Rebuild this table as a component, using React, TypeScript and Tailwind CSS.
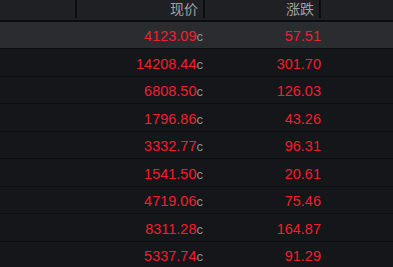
import React from "react";

const rows = [
  ["4123.09", "57.51"],
  ["14208.44", "301.70"],
  ["6808.50", "126.03"],
  ["1796.86", "43.26"],
  ["3332.77", "96.31"],
  ["1541.50", "20.61"],
  ["4719.06", "75.46"],
  ["8311.28", "164.87"],
  ["5337.74", "91.29"],
];

const font = { fontFamily: '"Liberation Sans", Arial, "Noto Sans CJK SC", sans-serif' };

export default function App() {
  return (
    <div className="w-[393px] h-[267px] overflow-hidden bg-[#151619]" style={font}>
      <div className="flex h-[20px] bg-[#1f2023] border-b-2 border-[#0c0d0f] box-content">
        <div className="w-[77px] border-r-2 border-[#0c0d0f] h-[18px]" />
        <div className="w-[128px] border-r-2 border-[#0c0d0f] h-[18px] flex items-center justify-end pr-[5px] text-[14px] text-[#9fa0a3]">
          现价
        </div>
        <div className="w-[116px] border-r-2 border-[#0c0d0f] h-[18px] flex items-center justify-end pr-[5px] text-[14px] text-[#9fa0a3]">
          涨跌
        </div>
        <div className="flex-1" />
      </div>
      {rows.map(([p, c], i) => (
        <div
          key={i}
          className={
            i === 0
              ? "flex h-[26px] items-center pt-[3px] bg-[#2b2c2f]"
              : "flex h-[27.5px] items-center pt-[3px] border-t border-[#0e0f11]"
          }
        >
          <div className="w-[207px] flex justify-end items-baseline pr-[4px]">
            <span className="text-[14.5px] text-[#f0202c] leading-none">{p}</span>
            <span className="text-[13px] text-[#8c8d90] leading-none">c</span>
          </div>
          <div className="w-[114px] flex justify-end">
            <span className="text-[14.5px] text-[#f0202c] leading-none">{c}</span>
          </div>
        </div>
      ))}
    </div>
  );
}
